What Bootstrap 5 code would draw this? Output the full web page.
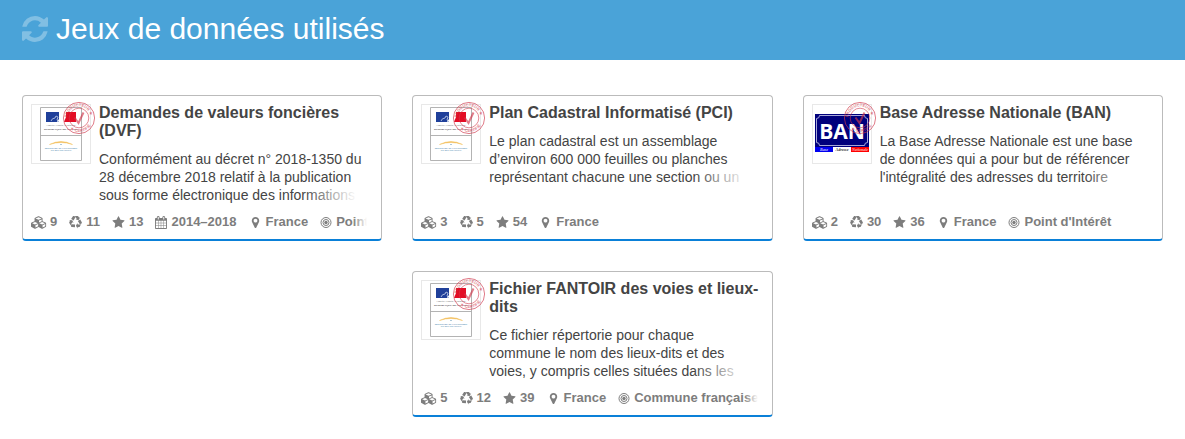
<!DOCTYPE html>
<html lang="fr">
<head>
<meta charset="utf-8">
<meta name="viewport" content="width=device-width, initial-scale=1">
<title>Jeux de données utilisés</title>
<link href="https://cdn.jsdelivr.net/npm/bootstrap@5.3.0/dist/css/bootstrap.min.css" rel="stylesheet">
<style>
body{font-family:"Liberation Sans",Arial,sans-serif;font-size:14px;line-height:18px;color:#444;background:#fff}
.wrap{max-width:1171px;padding:0 15px}
.banner{background:#4aa3d8;color:#fff}
.banner h1{font-size:30px;line-height:36px;padding:11px 0 13px}
.banner svg{width:26px;height:26px;fill:#fff;opacity:.3}
.sets{--bs-gutter-x:30px;--bs-gutter-y:30px;padding-top:35px}
.dataset{min-height:146px;border:1px solid #bbb;border-bottom:2px solid #0a80d8;border-radius:4px;padding:8px}
.logo{width:60px;height:60px;border:1px solid #e8e8e8}
.logo .emblem{display:block;width:58px;height:58px}
.logo .stamp{position:absolute;top:-4px;right:-6px;width:34px;height:34px}
.dataset h2{font-size:16px;line-height:18px;font-weight:700;margin:0 0 10px}
.dataset h2 a{color:#444;text-decoration:none}
.desc{max-height:54px;overflow:hidden;padding-right:8px}
.desc::after{content:"";position:absolute;right:0;bottom:0;width:70px;height:18px;background:linear-gradient(to right,rgba(255,255,255,0),#fff 54px)}
.meta{gap:12px;font-size:13px;font-weight:700;color:#7d7d7d;white-space:nowrap;overflow:hidden}
.meta::after{content:"";position:absolute;right:0;top:0;bottom:0;width:20px;background:linear-gradient(to right,rgba(255,255,255,0),#fff 14px)}
.meta svg{height:13px;fill:#7d7d7d;flex:none}
.meta li{gap:4px}
.meta li:first-child{gap:3px}
</style>
</head>
<body>
<svg class="d-none" aria-hidden="true">
<symbol id="cubes" viewBox="0 0 2304 1792"><path d="M640 1632l384-192v-314l-384 164v342zm-64-454l404-173-404-173-404 173zm1088 454l384-192v-314l-384 164v342zm-64-454l404-173-404-173-404 173zm-448-293l384-165v-266l-384 164v267zm-64-379l441-189-441-189-441 189zm1088 518v416q0 36-19 67t-52 47l-448 224q-25 14-57 14t-57-14l-448-224q-4-2-7-4-2 2-7 4l-448 224q-25 14-57 14t-57-14l-448-224q-33-16-52-47t-19-67v-416q0-38 21.5-70t56.5-48l434-186v-400q0-38 21.5-70t56.5-48l448-192q23-10 50-10t50 10l448 192q35 16 56.5 48t21.5 70v400l434 186q36 16 57 48t21 70z"/></symbol>
<symbol id="recycle" viewBox="0 0 1792 1792"><path d="M836 1169l-15 368-2 22-420-29q-36-3-67-31.5t-47-65.5q-11-27-14.5-55t4-65 12-55 21.5-64 19-53q78 12 509 28zm-387-586l180 379-147-92q-63 72-111.500 144.500t-72.500 125-39.500 94.500-18.500 63l-4 21-190-357q-17-26-18-56t6-47l8-18q35-63 114-188l-140-86zm1231 517l-188 359q-12 29-36.500 46.500t-43.500 20.500l-18 4q-71 7-219 12l8 164-230-367 211-362 7 173q170 16 283 5t170-33zm-785-924q-47 63-265 435l-317-187-19-12 225-356q20-31 60-45t80-10q24 2 48.500 12t42 21 41.500 33 36 34.500 36 39.500 32 35zm655 307l212 363q18 37 12.500 76t-27.500 74q-13 20-33 37t-38 28-48.500 22-47 16-51.500 14-46 12q-34-72-265-436l313-195zm-143-226l142-83-220 373-419-20 151-86q-34-89-75-166t-75.500-123.500-64.500-80-47-46.500l-17-13 405 1q31-3 58 10.500t39 28.500l11 15q39 61 112 190z"/></symbol>
<symbol id="star" viewBox="0 0 1792 1792"><path d="M1728 647q0 22-26 48l-363 354 86 500q1 7 1 20 0 21-10.500 35.500t-30.500 14.500q-19 0-40-12l-449-236-449 236q-22 12-40 12-21 0-31.500-14.500t-10.500-35.500q0-6 2-20l86-500-364-354q-25-27-25-48 0-37 56-46l502-73 225-455q19-41 49-41t49 41l225 455 502 73q56 9 56 46z"/></symbol>
<symbol id="calendar" viewBox="64 0 1664 1792"><path d="M192 1664h288v-288h-288v288zm352 0h320v-288h-320v288zm-352-352h288v-320h-288v320zm352 0h320v-320h-320v320zm-352-384h288v-288h-288v288zm736 736h320v-288h-320v288zm-384-736h320v-288h-320v288zm768 736h288v-288h-288v288zm-384-352h320v-320h-320v320zm-352-864v-288q0-13-9.500-22.500t-22.500-9.500h-64q-13 0-22.500 9.500t-9.500 22.500v288q0 13 9.500 22.500t22.500 9.500h64q13 0 22.500-9.500t9.500-22.500zm736 864h288v-320h-288v320zm-384-384h320v-288h-320v288zm384 0h288v-288h-288v288zm32-480v-288q0-13-9.500-22.500t-22.500-9.500h-64q-13 0-22.500 9.500t-9.500 22.500v288q0 13 9.500 22.500t22.500 9.500h64q13 0 22.500-9.500t9.500-22.500zm384-64v1280q0 52-38 90t-90 38h-1408q-52 0-90-38t-38-90v-1280q0-52 38-90t90-38h128v-96q0-66 47-113t113-47h64q66 0 113 47t47 113v96h384v-96q0-66 47-113t113-47h64q66 0 113 47t47 113v96h128q52 0 90 38t38 90z"/></symbol>
<symbol id="pin" viewBox="0 0 1792 1792"><path d="M1152 640q0-106-75-181t-181-75-181 75-75 181 75 181 181 75 181-75 75-181zm256 0q0 109-33 179l-364 774q-16 33-47.500 52t-67.500 19-67.500-19-46.500-52l-365-774q-33-70-33-179 0-212 150-362t362-150 362 150 150 362z"/></symbol>
<symbol id="bullseye" viewBox="0 0 12 13"><g fill="none" stroke="#7d7d7d" stroke-width="1"><circle cx="6" cy="6.500" r="5"/><circle cx="6" cy="6.500" r="3"/></g><circle cx="6" cy="6.500" r="1.700"/></symbol>
<symbol id="certified" viewBox="0 0 34 34"><g fill="none" stroke="#d2384c" opacity=".65"><circle cx="17" cy="17" r="15.600" stroke-width="1"/><circle cx="17" cy="17" r="9.800" stroke-width=".9"/><path d="M12.500 16.500l4 5.500 5-10.500" stroke-width="2"/></g><path id="arcTop" d="M6.300 21.500A11.600 11.600 0 1 1 28.500 18.600" fill="none"/><path id="arcLow" d="M6 25.500A14 14 0 0 0 29.500 23.500" fill="none"/><g fill="#d2384c" opacity=".65" font-family="Liberation Sans,sans-serif" font-weight="700" font-size="4"><text><textPath href="#arcTop" startOffset="5">PRODUCTEUR ★</textPath></text><text><textPath href="#arcLow" startOffset="3">★ CERTIFIÉ</textPath></text></g></symbol>
<symbol id="ministry" viewBox="0 0 58 58"><path d="M8.500 2.500h41v53h-41zM8.500 30.500h41" fill="#fff" stroke="#aaa" stroke-width=".9"/><path d="M14 7h13v7l-2 3H14z" fill="#20409a"/><path d="M34 7h10v10H32l2-5z" fill="#e30d25"/><path d="M19 16q1-3 4-3l1-2 2 1-1 3 2 2" fill="none" stroke="#a9b8dc" stroke-width="1"/><g text-anchor="middle" font-family="Liberation Serif,serif"><text x="29" y="20.500" font-size="2.500" font-style="italic" fill="#666">Liberté • Égalité • Fraternité</text><text x="29" y="25" font-size="2.700" font-weight="700" fill="#444">RÉPUBLIQUE FRANÇAISE</text><g font-size="2.300" font-weight="700" fill="#4b86ad"><text x="29" y="43.500">MINISTÈRE DE L’ÉCONOMIE</text><text x="29" y="46">ET DES FINANCES</text></g></g><path d="M17.500 39.500Q29 33.500 40.500 39.500Q29 35.500 17.500 39.500z" fill="#f3b84c" stroke="#f3c05e" stroke-width=".5"/><circle cx="29" cy="39.500" r=".6" fill="#4b86ad"/></symbol>
<symbol id="ban" viewBox="0 0 58 58"><path d="M2 9h54v33H2z" fill="#00007c"/><path d="M6.500 10.500h45q0 3 3 3v24q-3 0-3 3h-45q0-3-3-3v-24q3 0 3-3z" fill="none" stroke="#b9b9e2" stroke-width=".9"/><text x="29" y="34" text-anchor="middle" font-family="Open Sans,sans-serif" font-weight="700" font-size="21" fill="#fff">BAN</text><path d="M2 42h18v5H2z" fill="#0000f0"/><path d="M20 42h18v5H20z" fill="#fff"/><path d="M38 42h18v5H38z" fill="#f00"/><g text-anchor="middle" font-family="Liberation Serif,serif" font-weight="700" font-style="italic" font-size="4"><text x="11" y="46" fill="#ccf">Base</text><text x="29" y="46" fill="#333">Adresse</text><text x="47" y="46" fill="#fbb">Nationale</text></g></symbol>
</svg>

<header class="banner"><div class="container-fluid wrap"><h1 class="d-flex align-items-center m-0 fw-normal"><svg class="me-2" viewBox="0 0 1536 1536" aria-hidden="true"><path d="M1511 928q0 5-1 7-64 268-268 434.500t-478 166.500q-146 0-282.500-55t-243.500-157l-129 129q-19 19-45 19t-45-19-19-45v-448q0-26 19-45t45-19h448q26 0 45 19t19 45-19 45l-137 137q71 66 161 102t187 36q134 0 250-65t186-179q11-17 53-117 8-23 30-23h192q13 0 22.500 9.500t9.500 22.500zm25-800v448q0 26-19 45t-45 19h-448q-26 0-45-19t-19-45 19-45l138-138q-148-137-349-137-134 0-250 65t-186 179q-11 17-53 117-8 23-30 23h-199q-13 0-22.500-9.500t-9.500-22.500v-7q65-268 270-434.500t480-166.500q146 0 284 55.500t245 156.500l130-129q19-19 45-19t45 19 19 45z"/></svg>Jeux de données utilisés</h1></div></header>

<main class="container-fluid wrap">
<div class="sets row row-cols-1 row-cols-md-2 row-cols-lg-3 justify-content-center">
<div class="col"><article class="dataset d-flex flex-column h-100">
<div class="d-flex gap-2"><div class="logo position-relative flex-shrink-0"><svg class="emblem"><use href="#ministry"/></svg><svg class="stamp"><use href="#certified"/></svg></div>
<div class="flex-grow-1"><h2><a href="#">Demandes de valeurs foncières (DVF)</a></h2><div class="desc position-relative">Conformément au décret n° 2018-1350 du 28 décembre 2018 relatif à la publication sous forme électronique des informations</div></div></div>
<ul class="meta list-unstyled d-flex position-relative mt-auto mb-0"><li class="d-flex align-items-center"><svg width="16"><use href="#cubes"/></svg>9</li><li class="d-flex align-items-center"><svg width="13"><use href="#recycle"/></svg>11</li><li class="d-flex align-items-center"><svg width="13"><use href="#star"/></svg>13</li><li class="d-flex align-items-center"><svg width="12"><use href="#calendar"/></svg>2014–2018</li><li class="d-flex align-items-center"><svg width="13"><use href="#pin"/></svg>France</li><li class="d-flex align-items-center"><svg width="12"><use href="#bullseye"/></svg>Point</li></ul>
</article></div>
<div class="col"><article class="dataset d-flex flex-column h-100">
<div class="d-flex gap-2"><div class="logo position-relative flex-shrink-0"><svg class="emblem"><use href="#ministry"/></svg><svg class="stamp"><use href="#certified"/></svg></div>
<div class="flex-grow-1"><h2><a href="#">Plan Cadastral Informatisé (PCI)</a></h2><div class="desc position-relative">Le plan cadastral est un assemblage d’environ 600 000 feuilles ou planches représentant chacune une section ou un</div></div></div>
<ul class="meta list-unstyled d-flex position-relative mt-auto mb-0"><li class="d-flex align-items-center"><svg width="16"><use href="#cubes"/></svg>3</li><li class="d-flex align-items-center"><svg width="13"><use href="#recycle"/></svg>5</li><li class="d-flex align-items-center"><svg width="13"><use href="#star"/></svg>54</li><li class="d-flex align-items-center"><svg width="13"><use href="#pin"/></svg>France</li></ul>
</article></div>
<div class="col"><article class="dataset d-flex flex-column h-100">
<div class="d-flex gap-2"><div class="logo position-relative flex-shrink-0"><svg class="emblem"><use href="#ban"/></svg><svg class="stamp"><use href="#certified"/></svg></div>
<div class="flex-grow-1"><h2><a href="#">Base Adresse Nationale (BAN)</a></h2><div class="desc position-relative">La Base Adresse Nationale est une base de données qui a pour but de référencer l'intégralité des adresses du territoire</div></div></div>
<ul class="meta list-unstyled d-flex position-relative mt-auto mb-0"><li class="d-flex align-items-center"><svg width="16"><use href="#cubes"/></svg>2</li><li class="d-flex align-items-center"><svg width="13"><use href="#recycle"/></svg>30</li><li class="d-flex align-items-center"><svg width="13"><use href="#star"/></svg>36</li><li class="d-flex align-items-center"><svg width="13"><use href="#pin"/></svg>France</li><li class="d-flex align-items-center"><svg width="12"><use href="#bullseye"/></svg>Point d'Intérêt</li></ul>
</article></div>
<div class="col"><article class="dataset d-flex flex-column h-100">
<div class="d-flex gap-2"><div class="logo position-relative flex-shrink-0"><svg class="emblem"><use href="#ministry"/></svg><svg class="stamp"><use href="#certified"/></svg></div>
<div class="flex-grow-1"><h2><a href="#">Fichier FANTOIR des voies et lieux-dits</a></h2><div class="desc position-relative">Ce fichier répertorie pour chaque commune le nom des lieux-dits et des voies, y compris celles situées dans les</div></div></div>
<ul class="meta list-unstyled d-flex position-relative mt-auto mb-0"><li class="d-flex align-items-center"><svg width="16"><use href="#cubes"/></svg>5</li><li class="d-flex align-items-center"><svg width="13"><use href="#recycle"/></svg>12</li><li class="d-flex align-items-center"><svg width="13"><use href="#star"/></svg>39</li><li class="d-flex align-items-center"><svg width="13"><use href="#pin"/></svg>France</li><li class="d-flex align-items-center"><svg width="12"><use href="#bullseye"/></svg>Commune française</li></ul>
</article></div>
</div>
</main>
<script src="https://cdn.jsdelivr.net/npm/bootstrap@5.3.0/dist/js/bootstrap.bundle.min.js"></script>
</body>
</html>
